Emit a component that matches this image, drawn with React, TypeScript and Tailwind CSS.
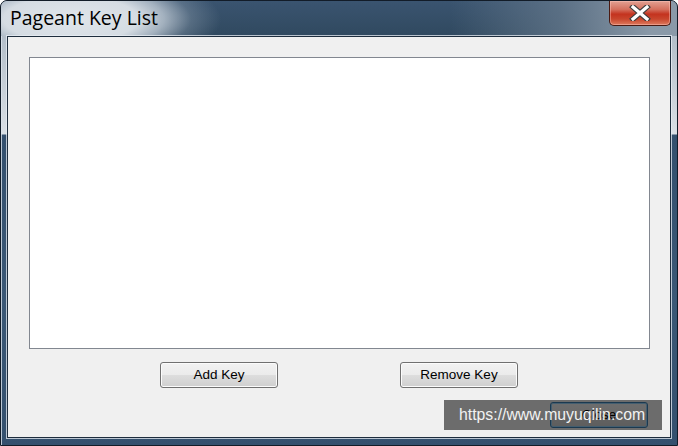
import React from "react";

function WinButton({
  label,
  className,
  isDefault,
}: {
  label: string;
  className: string;
  isDefault?: boolean;
}) {
  return (
    <div
      className={
        "flex items-center justify-center h-[26px] rounded-[3px] border text-[13.5px] text-black leading-none bg-[linear-gradient(to_bottom,#f2f2f2_0%,#ebebeb_48%,#dddddd_52%,#cfcfcf_100%)] " +
        (isDefault
          ? "border-[#3c7fb1] shadow-[inset_0_0_0_1px_#97d1f5] "
          : "border-[#707070] shadow-[inset_0_0_0_1px_#fbfbfb] ") +
        className
      }
      style={{ fontFamily: '"Liberation Sans", Arial, sans-serif' }}
    >
      {label}
    </div>
  );
}

export default function App() {
  return (
    <div className="w-[678px] h-[446px] overflow-hidden">
      <div className="relative w-[678px] h-[446px] rounded-t-[7px] border border-[#121c28] bg-[#33506e] bg-[linear-gradient(to_bottom,transparent_35px,#b3bec9_35px,#d9dfe5_133px,#34506e_134px,#3b5876_300px,#34506e_446px)] shadow-[inset_1px_1px_0_rgba(220,228,236,0.8)] flex flex-col">
        {/* Title bar */}
        <div className="h-[35px] flex items-start rounded-t-[6px] bg-[radial-gradient(ellipse_150px_50px_at_70px_18px,#e0e5ea_0%,#d5dce3_45%,rgba(200,210,220,0.75)_62%,rgba(150,166,182,0.35)_80%,rgba(120,140,160,0)_100%),linear-gradient(to_right,rgba(0,0,0,0)_450px,rgba(105,124,143,0.7)_560px,rgba(138,153,168,1)_650px),linear-gradient(to_bottom,#3a5470,#30495f)]">
          <div
            className="pl-[9px] pt-[4px] text-[19.5px] leading-[26px] text-black"
            style={{ fontFamily: '"Open Sans", "Noto Sans", sans-serif' }}
          >
            Pageant Key List
          </div>
          <div className="ml-auto mr-[6px] w-[62px] h-[25px] rounded-b-[5px] border border-t-0 border-[#4a1a12] bg-[linear-gradient(to_bottom,#e2a193_0%,#d4705e_35%,#c4331f_55%,#c8462d_75%,#de7a5e_100%)] shadow-[inset_0_0_0_1px_rgba(255,200,190,0.45)] flex items-center justify-center">
            <svg width="22" height="16" viewBox="0 0 22 16">
              <path d="M4 2 L18 14 M18 2 L4 14" stroke="#3c3c3c" strokeWidth="5.5" strokeLinecap="square" />
              <path d="M4 2 L18 14 M18 2 L4 14" stroke="#ffffff" strokeWidth="3.2" strokeLinecap="square" />
            </svg>
          </div>
        </div>

        {/* Client area */}
        <div className="ml-[6px] w-[664px] h-[402px] border border-[#1e2d3d] bg-[#f0f0f0] shadow-[0_0_0_1px_rgba(232,238,244,0.75)]">
          <div className="flex flex-col pl-[21px] pt-[20px]">
            <div className="w-[621px] h-[292px] bg-white border border-[#828790]" />
            <div className="flex mt-[13px]">
              <WinButton label="Add Key" className="ml-[131px] w-[118px]" />
              <WinButton label="Remove Key" className="ml-[122px] w-[118px]" />
            </div>
            <div className="flex mt-[14px]">
              <WinButton label="Close" className="ml-[521px] w-[98px]" isDefault />
            </div>
          </div>
        </div>

        {/* Watermark overlay */}
        <div
          className="absolute left-[443px] top-[399px] w-[218px] h-[30px] bg-[rgba(0,0,0,0.55)] flex items-center pl-[15px] text-[15.8px] text-[#f2f2f2]"
          style={{ fontFamily: '"Liberation Sans", Arial, sans-serif' }}
        >
          https://www.muyuqilin.com
        </div>
      </div>
    </div>
  );
}
